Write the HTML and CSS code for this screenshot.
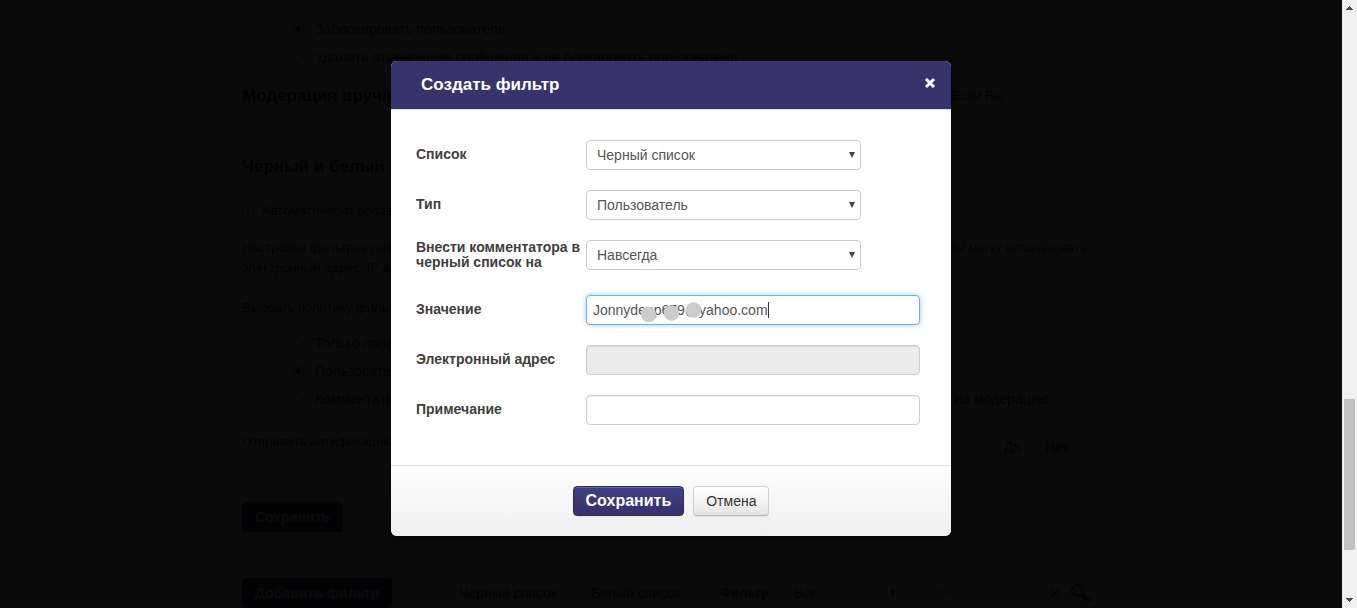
FILE: index.html
```html
<!DOCTYPE html>
<html lang="ru">
<head>
<meta charset="utf-8">
<title>Создать фильтр</title>
<link rel="stylesheet" href="styles.css">
</head>
<body>
<div class="app">
  <div class="viewport">
    <main class="page">
      <div class="options">
        <label class="option"><input type="radio" class="radio" name="spam" checked>Заблокировать пользователя</label>
        <label class="option"><input type="radio" class="radio" name="spam">Удалить отмеченные сообщения и не блокировать пользователя</label>
      </div>
      <div class="section-head section-head-manual">
        <h2 class="heading">Модерация вручную</h2>
        <span class="small">Если Вы</span>
      </div>
      <h2 class="heading heading-lists">Черный и белый с</h2>
      <label class="auto-add small"><input type="checkbox" class="check">Автоматически добавлять</label>
      <div class="description small">
        <div class="split"><span>Настройки фильтров позв</span><span>Модераторы могут использовать</span></div>
        <div>электронный адрес, IP адрес</div>
      </div>
      <p class="policy small">Выбрать политику фильтров</p>
      <div class="options">
        <label class="option"><input type="radio" class="radio" name="policy">Только пользователи</label>
        <label class="option"><input type="radio" class="radio" name="policy" checked>Пользователи</label>
        <div class="option-row">
          <label class="option"><input type="radio" class="radio" name="policy">Комментаторы</label>
          <span>на модерацию.</span>
        </div>
      </div>
      <div class="notify">
        <span class="small">Отправить нотификацию</span>
        <div class="toggle"><button type="button" class="toggle-item">Да</button><button type="button" class="toggle-item toggle-active">Нет</button></div>
      </div>
      <button type="button" class="btn btn-primary page-save">Сохранить</button>
      <div class="toolbar">
        <button type="button" class="btn btn-primary">Добавить фильтр</button>
        <nav class="tabs">
          <a href="#black" class="tab tab-active">Черный список</a>
          <a href="#white" class="tab">Белый список</a>
        </nav>
        <label class="filter-label" for="filter">Фильтр:</label>
        <div class="select-wrap filter-select">
          <select class="control select" id="filter"><option>Все</option></select>
          <svg class="arrow" viewBox="0 0 6 6" aria-hidden="true"><path d="M0 0h6L3 6z"/></svg>
        </div>
        <div class="search">
          <input class="search-input" type="text" placeholder="Поиск" aria-label="Поиск">
          <svg class="search-clear" viewBox="0 0 12 12" aria-hidden="true"><path d="M1 1l10 10M11 1L1 11"/></svg>
          <svg class="search-icon" viewBox="0 0 22 18" aria-hidden="true"><circle cx="7" cy="6.500" r="5.500"/><path d="M11 10.500l9 6.500" class="handle"/></svg>
        </div>
      </div>
    </main>
    <div class="overlay">
      <form class="modal" role="dialog" aria-labelledby="title">
        <header class="modal-head">
          <h1 class="modal-title" id="title">Создать фильтр</h1>
          <button type="button" class="close" aria-label="Закрыть"><svg class="close-icon" viewBox="0 0 12 12" aria-hidden="true"><path d="M2 2l8 8M10 2l-8 8"/></svg></button>
        </header>
        <div class="modal-body">
          <div class="field">
            <label class="label" for="list">Список</label>
            <div class="select-wrap"><select class="control select" id="list"><option>Черный список</option></select><svg class="arrow" viewBox="0 0 6 6" aria-hidden="true"><path d="M0 0h6L3 6z"/></svg></div>
          </div>
          <div class="field">
            <label class="label" for="type">Тип</label>
            <div class="select-wrap"><select class="control select" id="type"><option>Пользователь</option></select><svg class="arrow" viewBox="0 0 6 6" aria-hidden="true"><path d="M0 0h6L3 6z"/></svg></div>
          </div>
          <div class="field field-term">
            <label class="label label-tall" for="term">Внести комментатора в черный список на</label>
            <div class="select-wrap"><select class="control select" id="term"><option>Навсегда</option></select><svg class="arrow" viewBox="0 0 6 6" aria-hidden="true"><path d="M0 0h6L3 6z"/></svg></div>
          </div>
          <div class="field">
            <label class="label" for="value">Значение</label>
            <div class="input-wrap">
              <input class="control input input-focus" type="text" id="value" value="Jonnydepp679@yahoo.com">
              <svg class="marks" viewBox="0 0 200 30" aria-hidden="true"><circle cx="62.500" cy="19.500" r="7.700"/><circle cx="85.500" cy="18" r="7.700"/><circle cx="107.500" cy="15" r="7.700"/><path d="M182 7h1v16h-1z" class="caret"/></svg>
            </div>
          </div>
          <div class="field">
            <label class="label" for="email">Электронный адрес</label>
            <input class="control input" type="text" id="email" disabled>
          </div>
          <div class="field">
            <label class="label" for="note">Примечание</label>
            <input class="control input" type="text" id="note">
          </div>
        </div>
        <footer class="modal-foot">
          <button type="submit" class="btn btn-primary btn-large">Сохранить</button>
          <button type="button" class="btn btn-plain">Отмена</button>
        </footer>
      </form>
    </div>
  </div>
  <div class="scrollbar" aria-hidden="true">
    <svg class="scroll-arrow" viewBox="0 0 7 4"><path d="M3 0h1v1h1v1h1v1h1v1H0V3h1V2h1V1h1z"/></svg>
    <div class="track"><div class="thumb"></div></div>
    <svg class="scroll-arrow" viewBox="0 0 7 4"><path d="M0 0h7v1H6v1H5v1H4v1H3V3H2V2H1V1H0z"/></svg>
  </div>
</div>
</body>
</html>
```
FILE: styles.css
```css
* { box-sizing: border-box; }

body {
  margin: 0;
  font: 14px/20px "Liberation Sans", Arial, sans-serif;
  color: #333;
  background: #fff;
}

button, input, select { font: inherit; color: inherit; margin: 0; }
h1, h2, p { margin: 0; }

.app { display: grid; grid-template-columns: 1fr 15px; height: 100vh; }
.viewport { position: relative; overflow: hidden; }

/* Settings page under the dialog */
.page { max-width: 858px; margin: 0 auto; padding-top: 19px; }
.small { font-size: 13px; }
.options { display: grid; gap: 8px; padding-left: 50px; }
.option { display: flex; align-items: center; gap: 11px; white-space: nowrap; }
.option-row { display: flex; justify-content: space-between; padding-right: 47px; }

.radio, .check {
  appearance: none;
  flex: none;
  width: 12px;
  height: 12px;
  border: 1px solid #777;
}
.radio { border-radius: 50%; }
.radio:checked { background: radial-gradient(circle, #444 2px, #fff 4px); }
.check { border-radius: 2px; }

.heading { font-size: 17px; line-height: 20px; font-weight: bold; }
.section-head { display: flex; justify-content: space-between; align-items: center; }
.section-head-manual { margin-top: 19px; padding-right: 97px; }
.heading-lists { margin-top: 51px; }
.auto-add { display: flex; align-items: center; gap: 8px; margin-top: 24px; }
.description { margin-top: 17px; }
.split { display: flex; justify-content: space-between; padding-right: 13px; }
.policy { margin: 20px 0 15px; }

.notify { display: flex; justify-content: space-between; margin-top: 23px; padding-right: 18px; }
.toggle { display: flex; border: 1px solid #ccc; border-radius: 4px; }
.toggle-item { padding: 4px 12px; border: 0; background: #fff; }
.toggle-active { background: #e2e2e2; }
.page-save { margin-top: 40px; }

.toolbar { display: flex; align-items: center; margin-top: 46px; }
.tabs { display: flex; margin-left: 55px; }
.tab { padding: 5px 12px; border-radius: 4px; color: #1d3f6e; text-decoration: none; }
.tab-active { margin-right: 10px; color: #333; background: #eee; }
.filter-label { margin-left: auto; margin-right: 10px; font-weight: bold; font-size: 13px; }
.filter-select { width: 119px; }
.search {
  display: flex;
  align-items: center;
  gap: 10px;
  width: 184px;
  height: 30px;
  margin-left: 14px;
  padding: 0 7px;
  border: 1px solid #ccc;
  border-radius: 4px;
}
.search-input { flex: 1; min-width: 0; padding: 0; border: 0; background: none; }
.search-input::placeholder { color: #999; }
.search-clear { width: 10px; stroke: #555; stroke-width: 2; }
.search-icon { width: 22px; fill: none; stroke: #555; stroke-width: 2; }
.handle { stroke-width: 4; }

/* Buttons */
.btn { display: block; height: 30px; padding: 0 12px; border: 1px solid; border-radius: 4px; white-space: nowrap; }
.btn-primary {
  color: #fff;
  font-weight: bold;
  border-color: #2f2c62;
  background: linear-gradient(#3d4182, #38306a);
  box-shadow: inset 0 1px 0 rgba(255, 255, 255, .2), 0 1px 2px rgba(0, 0, 0, .05);
}
.btn-large { font-size: 16px; }
.btn-plain {
  border-color: #d4d4d4 #d0d0d0 #b3b3b3;
  background: linear-gradient(#fff, #e6e6e6);
  box-shadow: 0 1px 2px rgba(0, 0, 0, .05);
}

/* Dialog */
.overlay {
  position: absolute;
  inset: 0;
  display: flex;
  align-items: flex-start;
  justify-content: center;
  padding-top: 61px;
  background: rgba(0, 0, 0, .96);
}
.modal {
  width: 560px;
  max-width: 100%;
  border-radius: 6px;
  overflow: hidden;
  background: #fff;
  box-shadow: 0 3px 7px rgba(0, 0, 0, .3);
}
.modal-head {
  display: flex;
  align-items: center;
  justify-content: space-between;
  padding: 14px 15px 14px 30px;
  border-bottom: 1px solid #dddde8;
  background: #37336b;
  color: #fff;
}
.modal-title { font-size: 17px; line-height: 20px; }
.close { display: flex; padding: 0 0 5px; border: 0; background: none; }
.close-icon { width: 12px; fill: none; stroke: #fff; stroke-width: 3; }
.modal-body { display: grid; gap: 20px; padding: 30px 31px 40px 25px; }
.field { display: grid; grid-template-columns: 170px 1fr; align-items: center; }
.field-term { margin-bottom: 5px; }
.label { padding-bottom: 2px; font-weight: bold; line-height: 15px; color: #404040; }
.label-tall { padding-bottom: 0; }

.control {
  display: block;
  width: 100%;
  height: 30px;
  border: 1px solid #ccc;
  border-radius: 4px;
  background: #fff;
  color: #555;
}
.select-wrap { position: relative; max-width: 275px; }
.select { appearance: none; padding: 0 20px 0 10px; }
.arrow { position: absolute; right: 6px; top: 12px; width: 6px; height: 6px; fill: #444; pointer-events: none; }
.input { padding: 0 6px; box-shadow: inset 0 1px 1px rgba(0, 0, 0, .08); }
.input:disabled { background: #ebebeb; }
.input-focus { border-color: #6db0f5; box-shadow: 0 0 5px rgba(82, 168, 236, .6); }
.input-wrap { position: relative; }
.marks { position: absolute; left: 0; top: 0; width: 200px; height: 30px; fill: #ccc; pointer-events: none; }
.caret { fill: #333; }

.modal-foot {
  display: flex;
  justify-content: center;
  gap: 9px;
  padding: 20px;
  border-top: 1px solid #ddd;
  background: linear-gradient(#fefefe, #efefef);
}

/* Window scrollbar */
.scrollbar { display: flex; flex-direction: column; align-items: center; padding: 6px 0; background: #f1f1f1; }
.scroll-arrow { width: 7px; height: 4px; fill: #505050; shape-rendering: crispEdges; }
.track { flex: 1; display: flex; flex-direction: column; justify-content: flex-end; width: 11px; padding-bottom: 48px; }
.thumb { height: 28%; min-height: 20px; background: #c1c1c1; }
```
